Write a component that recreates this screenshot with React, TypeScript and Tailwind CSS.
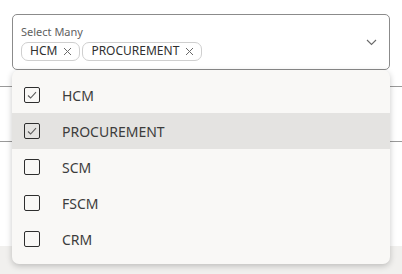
import { useState } from 'react'

const options = ['HCM', 'PROCUREMENT', 'SCM', 'FSCM', 'CRM']

function Check() {
  return (
    <svg width="12" height="12" viewBox="0 0 12 12" fill="none" stroke="#5c5c5c" strokeWidth="1.1">
      <path d="M2 6.5 4.6 9 10 3.2" />
    </svg>
  )
}

export default function App() {
  const [selected] = useState<string[]>(['HCM', 'PROCUREMENT'])
  const active = 'PROCUREMENT'

  return (
    <div className="relative w-[402px] h-[274px] bg-white overflow-hidden font-['Noto_Sans',sans-serif] text-[#313131]">
      {/* page behind the popup */}
      <div className="absolute left-0 right-0 top-[86px] border-t border-[#9a9a9a]" />
      <div className="absolute left-0 right-0 top-[141px] border-t border-[#9a9a9a]" />
      <div className="absolute left-0 right-0 top-[246px] bottom-0 bg-[#f1f0ee]" />

      <div className="relative px-3 pt-[14px]">
        {/* field */}
        <div className="h-[56px] border border-[#8b8b8b] rounded-[5px] bg-white flex items-center pl-[8px] pr-[12px]">
          <div className="flex-1 flex flex-col">
            <span className="text-[11px] leading-[14px] text-[#5f5f5f] mt-[1px]">Select Many</span>
            <div className="flex gap-[2px] mt-[3px]">
              {selected.map((s) => (
                <span
                  key={s}
                  className="h-[19px] pl-[8px] pr-[7px] flex items-center gap-[6px] border border-[#cfcfcf] rounded-[7px] text-[12px] leading-none text-[#2f2f2f]"
                >
                  {s}
                  <svg width="9" height="9" viewBox="0 0 9 9" stroke="#6a6a6a" strokeWidth="1">
                    <path d="M1 1 8 8M8 1 1 8" />
                  </svg>
                </span>
              ))}
            </div>
          </div>
          <svg width="11" height="7" viewBox="0 0 11 7" fill="none" stroke="#6a6a6a" strokeWidth="1.1">
            <path d="M1 1l4.5 4.5L10 1" />
          </svg>
        </div>

        {/* popup */}
        <div className="bg-[#f9f8f6] rounded-[7px] shadow-[0_2px_6px_rgba(0,0,0,0.22)] pt-[7px] pb-[7px]">
          {options.map((o) => (
            <div
              key={o}
              className={`h-[36px] flex items-center pl-[12px] ${o === active ? 'bg-[#e4e3e1]' : ''}`}
            >
              <span className="w-[16px] h-[16px] border border-[#2e2e2e] rounded-[2px] flex items-center justify-center">
                {selected.includes(o) && <Check />}
              </span>
              <span className="ml-[22px] text-[14px] text-[#3c3c3c]">{o}</span>
            </div>
          ))}
        </div>
      </div>
    </div>
  )
}
